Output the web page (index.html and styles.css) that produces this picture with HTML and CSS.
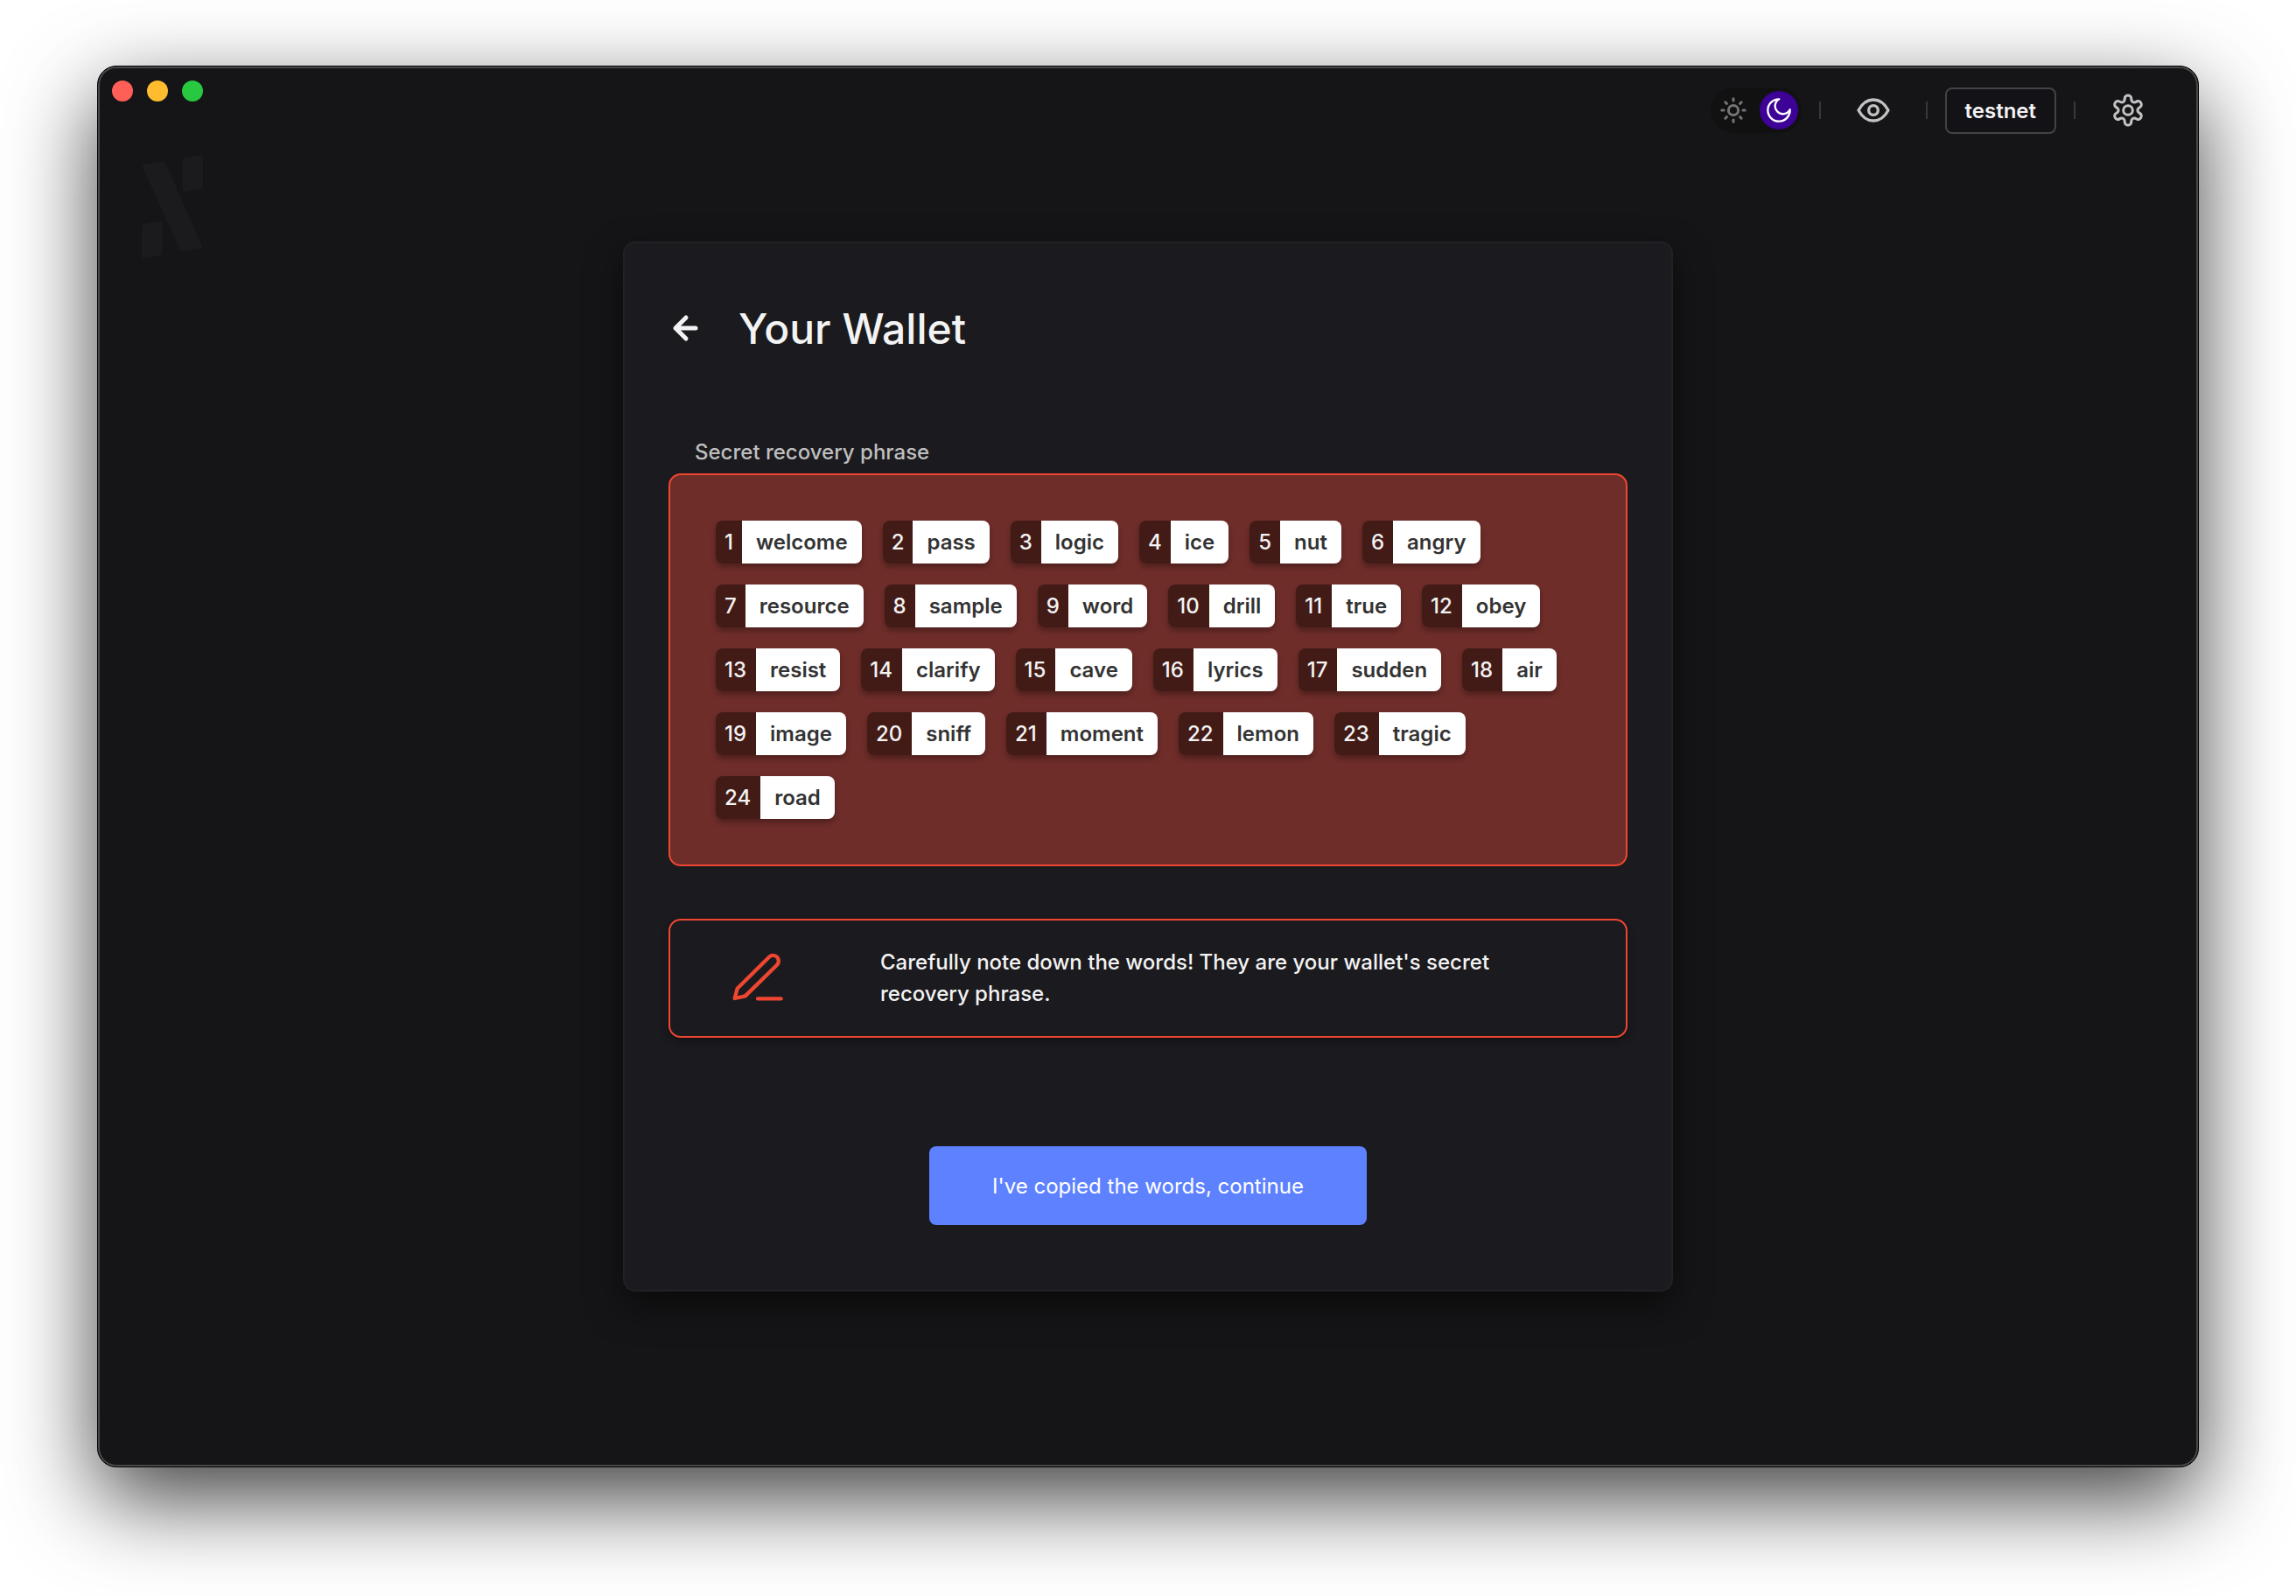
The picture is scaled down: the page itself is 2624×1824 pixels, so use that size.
FILE: index.html
```html
<!DOCTYPE html>
<html lang="en">
<head>
<meta charset="utf-8">
<title>Your Wallet</title>
<link rel="stylesheet" href="styles.css">
</head>
<body>
<div class="window">
  <header class="topbar">
    <div class="lights">
      <span class="light light-close"></span>
      <span class="light light-min"></span>
      <span class="light light-max"></span>
    </div>
    <div class="tools">
      <div class="theme">
        <button class="theme-btn" type="button" aria-label="Light theme">
          <svg width="32" height="32" viewBox="0 0 32 32" fill="none" stroke="currentColor" stroke-width="3" stroke-linecap="round"><circle cx="16" cy="16" r="5.6"/><path d="M16 2.8v2.2M16 27v2.2M2.8 16h2.2M27 16h2.2M6.8 6.8l1.6 1.6M23.6 23.6l1.6 1.6M6.8 25.2l1.6-1.6M23.6 8.4l1.6-1.6"/></svg>
        </button>
        <button class="theme-btn theme-active" type="button" aria-label="Dark theme">
          <svg width="32" height="32" viewBox="216 60 96 96" fill="none" stroke="currentColor" stroke-width="7" stroke-linejoin="round"><path d="M302 106A38 38 0 1 1 265 70A27 27 0 1 0 302 106Z"/></svg>
        </button>
      </div>
      <span class="divider"></span>
      <button class="icon-btn" type="button" aria-label="Show or hide">
        <svg width="40" height="32" viewBox="528 60 120 96" fill="none" stroke="currentColor" stroke-width="10" stroke-linejoin="round"><path d="M537 108Q556 72 588 72T639 108Q620 144 588 144T537 108Z"/><circle cx="588" cy="108" r="16"/></svg>
      </button>
      <span class="divider"></span>
      <button class="network" type="button">testnet</button>
      <span class="divider"></span>
      <button class="icon-btn" type="button" aria-label="Settings">
        <svg width="40" height="40" viewBox="-60 -60 120 120" fill="none" stroke="currentColor" stroke-width="9" stroke-linecap="round"><circle r="16"/><path id="tooth" d="M-11 -42A11 9 0 0 1 11 -42C11 -28 18.7 -23.5 30.9 -30.5"/><use href="#tooth" transform="rotate(60)"/><use href="#tooth" transform="rotate(120)"/><use href="#tooth" transform="rotate(180)"/><use href="#tooth" transform="rotate(240)"/><use href="#tooth" transform="rotate(300)"/></svg>
      </button>
    </div>
  </header>
  <div class="content">
    <svg class="logo" width="70" height="120" viewBox="216 346 210 360" fill="currentColor"><path d="M226 382L286 372Q294 371 298 379L423 661Q425 667 418 669L358 680Q350 681 347 674L219 391Q217 384 226 382ZM364 358L420 348Q426 347 426 354V458Q426 465 419 466L363 476Q356 477 356 470V367Q356 360 364 358ZM224 586L280 576Q286 575 286 582V686Q286 692 279 694L223 704Q216 705 216 698V595Q216 588 224 586Z"/></svg>
    <main class="card">
      <div class="card-head">
        <button class="back" type="button" aria-label="Back">
          <svg width="40" height="40" viewBox="0 1 40 40" fill="none" stroke="currentColor" stroke-width="5" stroke-linecap="round" stroke-linejoin="round"><path d="M31 20H8M20 8L8 20L20 32"/></svg>
        </button>
        <h1 class="title">Your Wallet</h1>
      </div>
      <h2 class="label">Secret recovery phrase</h2>
      <ol class="phrase">
        <li class="chip"><span class="num">1</span><span class="word">welcome</span></li>
        <li class="chip"><span class="num">2</span><span class="word">pass</span></li>
        <li class="chip"><span class="num">3</span><span class="word">logic</span></li>
        <li class="chip"><span class="num">4</span><span class="word">ice</span></li>
        <li class="chip"><span class="num">5</span><span class="word">nut</span></li>
        <li class="chip"><span class="num">6</span><span class="word">angry</span></li>
        <li class="chip"><span class="num">7</span><span class="word">resource</span></li>
        <li class="chip"><span class="num">8</span><span class="word">sample</span></li>
        <li class="chip"><span class="num">9</span><span class="word">word</span></li>
        <li class="chip"><span class="num">10</span><span class="word">drill</span></li>
        <li class="chip"><span class="num">11</span><span class="word">true</span></li>
        <li class="chip"><span class="num">12</span><span class="word">obey</span></li>
        <li class="chip"><span class="num">13</span><span class="word">resist</span></li>
        <li class="chip"><span class="num">14</span><span class="word">clarify</span></li>
        <li class="chip"><span class="num">15</span><span class="word">cave</span></li>
        <li class="chip"><span class="num">16</span><span class="word">lyrics</span></li>
        <li class="chip"><span class="num">17</span><span class="word">sudden</span></li>
        <li class="chip"><span class="num">18</span><span class="word">air</span></li>
        <li class="chip"><span class="num">19</span><span class="word">image</span></li>
        <li class="chip"><span class="num">20</span><span class="word">sniff</span></li>
        <li class="chip"><span class="num">21</span><span class="word">moment</span></li>
        <li class="chip"><span class="num">22</span><span class="word">lemon</span></li>
        <li class="chip"><span class="num">23</span><span class="word">tragic</span></li>
        <li class="chip"><span class="num">24</span><span class="word">road</span></li>
      </ol>
      <div class="note">
        <div class="note-icon">
          <svg width="60" height="60" viewBox="48 54 180 180" fill="none" stroke="currentColor" stroke-width="13" stroke-linecap="round" stroke-linejoin="round"><path d="M59 213L68 179L177 71A19 19 0 0 1 204 98L95 205ZM138 214H218"/></svg>
        </div>
        <p class="note-text">Carefully note down the words! They are your wallet's secret recovery phrase.</p>
      </div>
      <button class="primary" type="button">I've copied the words, continue</button>
    </main>
  </div>
</div>
</body>
</html>
```

FILE: styles.css
```css
* { box-sizing: border-box; }

body {
  margin: 0;
  min-height: 100vh;
  padding: 75px 111px 147px;
  display: flex;
  background: #fff;
  color: #f3f3f3;
  font-family: Inter, "Liberation Sans", sans-serif;
  font-size: 24px;
  font-weight: 500;
  line-height: 36px;
}

button {
  padding: 0;
  border: 0;
  background: none;
  color: inherit;
  font: inherit;
  cursor: pointer;
}

svg { display: block; }

.window {
  flex: 1;
  min-width: 0;
  border: 1px solid #000;
  border-radius: 22px;
  background: #151517;
  box-shadow: inset 0 0 0 2px #48484a, 0 36px 100px rgba(0, 0, 0, 0.75);
}

.topbar {
  display: flex;
  justify-content: space-between;
  height: 100px;
  padding: 0 40px 0 16px;
}

.lights {
  display: flex;
  gap: 16px;
  padding-top: 16px;
}

.light {
  width: 24px;
  height: 24px;
  border-radius: 50%;
}

.light-close { background: #ff5f57; }
.light-min { background: #febc2e; }
.light-max { background: #28c840; }

.tools {
  display: flex;
  align-items: center;
  gap: 20px;
}

.theme {
  display: flex;
  gap: 8px;
  padding: 4px;
  border-radius: 26px;
  background: #111112;
}

.theme-btn {
  display: grid;
  place-items: center;
  width: 44px;
  height: 44px;
  border-radius: 50%;
  color: #747474;
}

.theme-active {
  background: #3d0296;
  color: #fff;
}

.divider {
  width: 2px;
  height: 20px;
  background: #38383a;
}

.icon-btn {
  display: grid;
  place-items: center;
  width: 80px;
  height: 52px;
  color: #c2c2c2;
}

.network {
  height: 53px;
  padding: 1px 21px 0;
  border: 2px solid #434346;
  border-radius: 8px;
  background: #131217;
  font-weight: 600;
}

.content {
  display: grid;
  grid-template-columns: 1fr minmax(0, 1200px) 1fr;
  padding-bottom: 100px;
}

.logo {
  margin-left: 50px;
  color: #1b1b1d;
}

.card {
  grid-column: 2;
  display: flex;
  flex-direction: column;
  margin-top: 100px;
  padding: 70px 50px 74px;
  border: 2px solid #222226;
  border-radius: 14px;
  background: #1b1a1e;
  box-shadow: 0 16px 40px rgba(0, 0, 0, 0.5);
}

.card-head {
  display: flex;
  align-items: center;
  gap: 40px;
  margin-bottom: 95px;
}

.title {
  margin: 0;
  font-size: 48px;
  font-weight: 500;
  line-height: 56px;
}

.label {
  margin: 0 0 6px;
  padding-left: 30px;
  color: #bfbfbf;
  font-size: 24px;
  font-weight: 500;
}

.phrase {
  display: flex;
  flex-wrap: wrap;
  gap: 24px;
  margin: 0;
  padding: 52px;
  border: 2px solid #ef4631;
  border-radius: 14px;
  background: #6f2d29;
  list-style: none;
}

.chip {
  display: flex;
  height: 49px;
  border-radius: 8px;
  overflow: hidden;
  line-height: 49px;
  box-shadow: 0 4px 6px rgba(0, 0, 0, 0.3);
}

.num {
  padding: 0 10px;
  background: #421b17;
}

.chip:nth-child(n + 10) .num { padding-right: 11px; }

.word {
  padding: 0 16px;
  background: #fff;
  color: #333;
  font-weight: 600;
}

.note {
  display: flex;
  align-items: center;
  gap: 40px;
  margin: 60px 0 124px;
  padding: 30px 100px 30px 0;
  border: 2px solid #ef4631;
  border-radius: 14px;
  box-shadow: 0 4px 10px rgba(0, 0, 0, 0.35);
}

.note-icon {
  display: grid;
  flex: 0 0 200px;
  place-items: center;
  color: #ef4631;
}

.note-text { margin: 0; }

.primary {
  align-self: center;
  width: 500px;
  max-width: 100%;
  height: 90px;
  padding-top: 1px;
  border-radius: 8px;
  background: #5e82ff;
  color: #fff;
  font-weight: 400;
}
```
